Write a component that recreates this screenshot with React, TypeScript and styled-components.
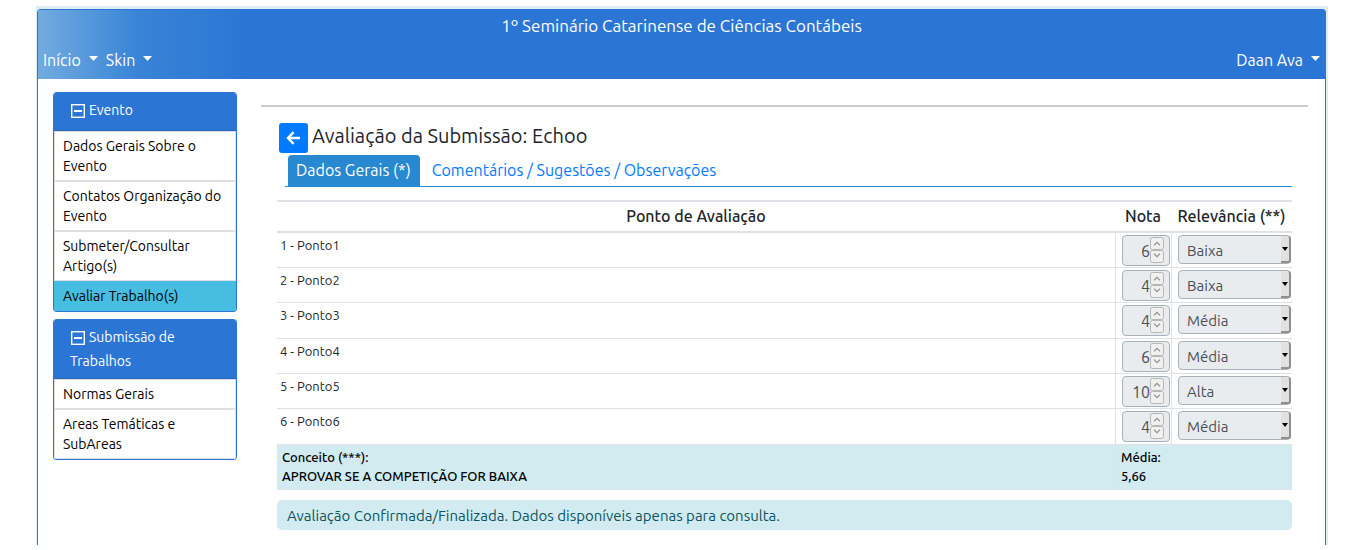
import React, { useId } from "react";
import styled, { createGlobalStyle, css } from "styled-components";

const GlobalStyle = createGlobalStyle`
  *, *::before, *::after { box-sizing: border-box; }
  body {
    margin: 0;
    background: #fff;
    color: #212529;
    font-family: Ubuntu, "Noto Sans", "Open Sans", sans-serif;
    font-size: 16px;
    line-height: 24px;
  }
`;

const Page = styled.div`
  margin: 6px 38px 0 36px;
  padding: 3px 2px 0 1px;
  min-height: calc(100vh - 11px);
  display: flex;
  background: #deedf1;
`;

const Frame = styled.div`
  flex: 1;
  min-width: 0;
  background: #fff;
  border: 1px solid #2b76d4;
  border-bottom: 0;
  border-radius: 4px 4px 0 0;
`;

const Header = styled.header`
  height: 69px;
  padding: 4px 5px 7px;
  display: flex;
  flex-direction: column;
  justify-content: space-between;
  color: #fff;
  background: linear-gradient(90deg, #72abdf 0, #3984d6 100px, #2b76d4 208px);
`;

const EventName = styled.div`
  text-align: center;
  font-size: 17px;
`;

const NavBar = styled.nav`
  display: flex;
  gap: 8px;
`;

const NavButton = styled.button<{ $end?: boolean }>`
  display: flex;
  align-items: center;
  gap: 8px;
  padding: 0;
  border: 0;
  background: none;
  color: inherit;
  font: inherit;
  margin-left: ${(p) => (p.$end ? "auto" : "0")};
`;

const Caret = styled.svg`
  width: 9px;
  height: 5px;
  margin-bottom: 3px;
  fill: #fff;
`;

const Body = styled.div`
  display: grid;
  grid-template-columns: 184px minmax(0, 1fr);
  column-gap: 24px;
  padding: 13px 17px 15px 15px;
`;

const Sidebar = styled.aside`
  display: flex;
  flex-direction: column;
  gap: 7px;
`;

const Card = styled.section`
  border: 1px solid #2b76d4;
  border-top: 0;
  border-radius: 4px;
  overflow: hidden;
`;

const CardHeader = styled.h2`
  display: flex;
  align-items: flex-start;
  min-height: 39px;
  margin: 0;
  padding: 6px 16px 5px;
  border-bottom: 1px solid #2367bb;
  background: #2b76d4;
  color: #fff;
  font-size: 14px;
  font-weight: 400;
  line-height: 24px;
`;

const CardIcon = styled.svg`
  width: 14px;
  height: 14px;
  margin: 0 4px 0 1px;
  vertical-align: -3px;
`;

const MenuList = styled.ul`
  margin: 0;
  padding: 0;
  list-style: none;
`;

const MenuLink = styled.a<{ $active?: boolean }>`
  display: block;
  padding: 4px 8px;
  border: 1px solid ${(p) => (p.$active ? "#46bde1" : "#dfdfdf")};
  background: ${(p) => (p.$active ? "#46bde1" : "#fff")};
  color: #000;
  font-size: 14px;
  line-height: 20px;
  text-decoration: none;
`;

const Main = styled.main`
  margin-top: 13px;
  padding: 16px 16px 0;
  border-top: 2px solid #ccc;
`;

const TitleRow = styled.div`
  display: flex;
  gap: 4px;
  padding-left: 2px;
`;

const BackButton = styled.button`
  display: flex;
  align-items: center;
  justify-content: center;
  width: 29px;
  height: 30px;
  padding: 0;
  border: 0;
  border-radius: 3px;
  background: #007bff;
`;

const Title = styled.h1`
  margin: 0;
  font-size: 20px;
  font-weight: 400;
  line-height: 26px;
`;

const Tabs = styled.div`
  display: flex;
  gap: 4px;
  margin: 2px 0 0 8px;
  padding-left: 3px;
  border-bottom: 1px solid #2888d0;
`;

const Tab = styled.button<{ $active?: boolean }>`
  height: 31px;
  padding: 0 9px 2px 8px;
  border: 0;
  border-radius: 4px 4px 0 0;
  font: inherit;
  color: ${(p) => (p.$active ? "#fff" : "#007bff")};
  background: ${(p) => (p.$active ? "#2888d0" : "none")};
`;

const Scores = styled.table`
  width: 100%;
  margin-top: 13px;
  table-layout: fixed;
  border-collapse: separate;
  border-spacing: 0;
`;

const HeadCell = styled.th`
  height: 33px;
  padding: 0 0 2px;
  border-top: 2px solid #dee2e6;
  border-bottom: 2px solid #dee2e6;
  font-weight: 500;
  font-size: 16px;
  white-space: nowrap;
`;

const BodyRow = styled.tr`
  height: 35px;
  &:nth-child(3n) { height: 36px; }
`;

const PointCell = styled.td`
  padding: 2px 3px;
  border-bottom: 1px solid #dee2e6;
  vertical-align: top;
  font-size: 13px;
  line-height: 20px;
`;

const FieldCell = styled.td`
  padding: 2px 0 0 6px;
  border-bottom: 1px solid #dee2e6;
  border-left: 1px solid #dee2e6;
  vertical-align: top;
`;

const SummaryCell = styled.td<{ $split?: boolean }>`
  height: 45px;
  padding: 3px 5px;
  border-bottom: 1px solid #dee2e6;
  border-left: ${(p) => (p.$split ? "1px solid #dee2e6" : "0")};
  background: #d1ebf0;
  color: #000;
  font-size: 13px;
  font-weight: 500;
  line-height: 19px;
  vertical-align: top;
`;

const Field = styled.div`
  position: relative;
`;

const control = css`
  display: block;
  margin: 0;
  border: 1px solid #a9b1b8;
  border-radius: 4px;
  background: #e9ecef;
  color: #495057;
  opacity: 1;
  appearance: none;
  font-family: inherit;
`;

const NumberInput = styled.input`
  ${control}
  width: 48px;
  height: 31px;
  padding: 0 19px 0 0;
  font-size: 16px;
  text-align: right;
  appearance: textfield;
  &::-webkit-inner-spin-button { display: none; }
`;

const Select = styled.select`
  ${control}
  width: 113px;
  height: 29px;
  padding: 1px 20px 0 8px;
  font-size: 15px;
`;

const Stepper = styled.svg`
  position: absolute;
  left: 28px;
  top: 2px;
`;

const DropMark = styled.span`
  position: absolute;
  right: 1px;
  top: 1px;
  width: 10px;
  height: 27px;
  display: flex;
  align-items: center;
  justify-content: center;
  border-right: 2px solid #8f8f8f;
  border-bottom: 2px solid #8f8f8f;
  border-radius: 0 3px 3px 0;
  background: #e1e1df;
  pointer-events: none;
`;

const Notice = styled.div`
  margin-top: 10px;
  padding: 5px 9px 3px;
  border: 1px solid #d1ebf0;
  border-radius: 5px;
  background: #d1ebf0;
  color: #0c5460;
  font-size: 15px;
  line-height: 20px;
`;

const DownCaret = () => (
  <Caret viewBox="0 0 9 5" aria-hidden="true">
    <path d="M0 0h9L4.500 5z" />
  </Caret>
);

const CollapseIcon = () => (
  <CardIcon viewBox="0 0 14 14" aria-hidden="true">
    <rect x="0.700" y="0.700" width="12.600" height="12.600" fill="none" stroke="#fff" strokeWidth="1.400" />
    <path d="M3 7h8" stroke="#fff" strokeWidth="1.800" />
  </CardIcon>
);

const BackIcon = () => (
  <svg width="15" height="14" viewBox="0 0 15 14" aria-hidden="true">
    <path d="M7.600 1.200 2 7l5.600 5.800M2.400 7H14" fill="none" stroke="#fff" strokeWidth="2.400" />
  </svg>
);

const menus = [
  {
    title: "Evento",
    items: ["Dados Gerais Sobre o Evento", "Contatos Organização do Evento", "Submeter/Consultar Artigo(s)", "Avaliar Trabalho(s)"],
  },
  { title: "Submissão de Trabalhos", items: ["Normas Gerais", "Areas Temáticas e SubAreas"] },
];

const points = [
  { grade: 6, relevance: "Baixa" },
  { grade: 4, relevance: "Baixa" },
  { grade: 4, relevance: "Média" },
  { grade: 6, relevance: "Média" },
  { grade: 10, relevance: "Alta" },
  { grade: 4, relevance: "Média" },
];

function GradeField({ value, labelledBy }: { value: number; labelledBy: string }) {
  return (
    <Field>
      <NumberInput type="number" defaultValue={value} disabled aria-labelledby={labelledBy} />
      <Stepper width="14" height="28" viewBox="0 0 14 28" aria-hidden="true">
        <g fill="#f0f0ef" stroke="#b6b6b3">
          <rect x=".5" y=".5" width="13" height="12" rx="2" />
          <rect x=".5" y="13.500" width="13" height="12" rx="2" />
        </g>
        <path d="M4 8.300 7 5.300 10 8.300M4 16.700 7 19.700 10 16.700" fill="none" stroke="#8b8e8f" strokeWidth="1.200" />
      </Stepper>
    </Field>
  );
}

function RelevanceField({ value, labelledBy }: { value: string; labelledBy: string }) {
  return (
    <Field>
      <Select defaultValue={value} disabled aria-labelledby={labelledBy}>
        <option>Baixa</option>
        <option>Média</option>
        <option>Alta</option>
      </Select>
      <DropMark>
        <svg width="6" height="4" viewBox="0 0 6 4" aria-hidden="true">
          <path d="M0 0h6L3 4z" />
        </svg>
      </DropMark>
    </Field>
  );
}

export default function App() {
  const id = useId();
  return (
    <>
      <GlobalStyle />
      <Page>
        <Frame>
          <Header>
            <EventName>1º Seminário Catarinense de Ciências Contábeis</EventName>
            <NavBar>
              <NavButton>Início <DownCaret /></NavButton>
              <NavButton>Skin <DownCaret /></NavButton>
              <NavButton $end>Daan Ava <DownCaret /></NavButton>
            </NavBar>
          </Header>
          <Body>
            <Sidebar>
              {menus.map((menu) => (
                <Card key={menu.title}>
                  <CardHeader>
                    <span><CollapseIcon />{menu.title}</span>
                  </CardHeader>
                  <MenuList>
                    {menu.items.map((item) => (
                      <li key={item}>
                        <MenuLink href="#" $active={item === "Avaliar Trabalho(s)"}>{item}</MenuLink>
                      </li>
                    ))}
                  </MenuList>
                </Card>
              ))}
            </Sidebar>
            <Main>
              <TitleRow>
                <BackButton aria-label="Voltar"><BackIcon /></BackButton>
                <Title>Avaliação da Submissão: Echoo</Title>
              </TitleRow>
              <Tabs role="tablist">
                <Tab role="tab" aria-selected $active>Dados Gerais (*)</Tab>
                <Tab role="tab" aria-selected={false}>Comentários / Sugestões / Observações</Tab>
              </Tabs>
              <Scores>
                <colgroup>
                  <col />
                  <col width="56" />
                  <col width="121" />
                </colgroup>
                <thead>
                  <tr>
                    <HeadCell>Ponto de Avaliação</HeadCell>
                    <HeadCell id={`${id}-grade`}>Nota</HeadCell>
                    <HeadCell id={`${id}-relevance`}>Relevância (**)</HeadCell>
                  </tr>
                </thead>
                <tbody>
                  {points.map((point, i) => (
                    <BodyRow key={i}>
                      <PointCell id={`${id}-p${i}`}>{`${i + 1} - Ponto${i + 1}`}</PointCell>
                      <FieldCell>
                        <GradeField value={point.grade} labelledBy={`${id}-p${i} ${id}-grade`} />
                      </FieldCell>
                      <FieldCell>
                        <RelevanceField value={point.relevance} labelledBy={`${id}-p${i} ${id}-relevance`} />
                      </FieldCell>
                    </BodyRow>
                  ))}
                </tbody>
                <tfoot>
                  <tr>
                    <SummaryCell>Conceito (***):<br />APROVAR SE A COMPETIÇÃO FOR BAIXA</SummaryCell>
                    <SummaryCell colSpan={2} $split>Média:<br />5,66</SummaryCell>
                  </tr>
                </tfoot>
              </Scores>
              <Notice role="status">Avaliação Confirmada/Finalizada. Dados disponíveis apenas para consulta.</Notice>
            </Main>
          </Body>
        </Frame>
      </Page>
    </>
  );
}
